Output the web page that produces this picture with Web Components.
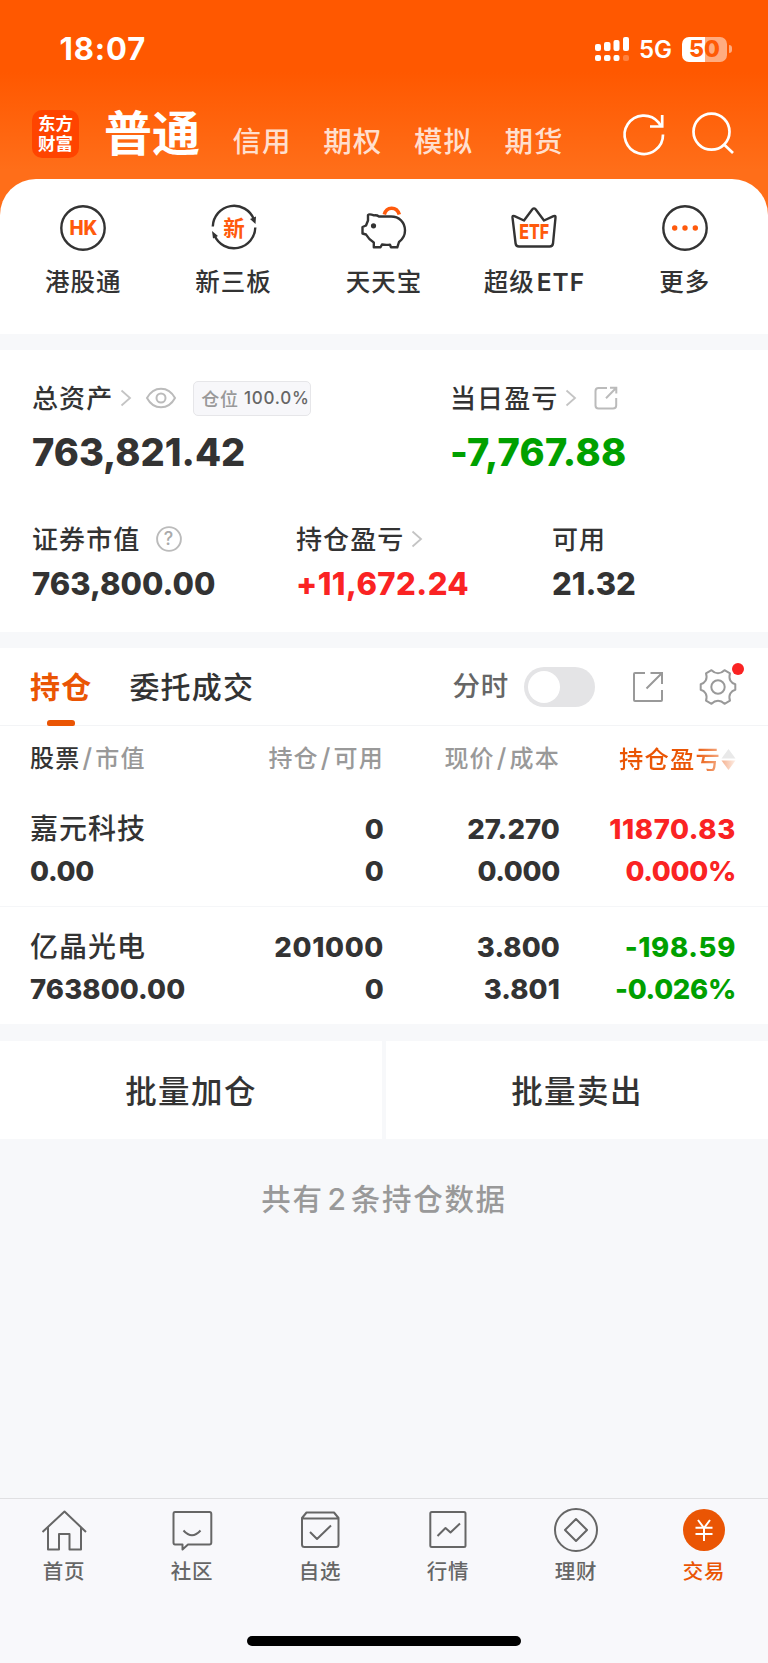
<!DOCTYPE html>
<html lang="zh-CN">
<head>
<meta charset="utf-8">
<meta name="viewport" content="width=device-width, initial-scale=1">
<title>交易</title>
<style>
  body {
    margin: 0;
    background: #f7f8fa;
    color: #333;
    font-family: Inter, "Noto Sans CJK SC", sans-serif;
    font-weight: 500;
  }
</style>
</head>
<body>
<trade-page></trade-page>

<script>
const ICONS = {
  signal: `<svg width="35" height="26" viewBox="0 0 35 26" fill="#fff">
    <rect x="0" y="8" width="6" height="7" rx="2"/><rect x="9" y="6" width="6.500" height="9" rx="2"/>
    <rect x="18.500" y="4" width="6" height="11" rx="2"/><rect x="28" y="1" width="6" height="14" rx="2"/>
    <rect x="0" y="19" width="6" height="6" rx="2"/><rect x="9" y="19" width="6.500" height="6" rx="2"/>
    <rect x="18.500" y="19" width="6" height="6" rx="2"/><rect x="28" y="19" width="6" height="6" rx="2" opacity=".25"/></svg>`,
  refresh: `<svg width="44" height="44" viewBox="0 0 44 44" fill="none" stroke="#fff" stroke-width="2.700">
    <path d="M41 22.500A19.200 19.200 0 1 1 36.500 10.400L39 14"/><path d="M40.200 3V14.500H28"/></svg>`,
  search: `<svg width="44" height="44" viewBox="0 0 44 44" fill="none" stroke="#fff" stroke-width="2.700">
    <circle cx="20.500" cy="20.700" r="18"/><path d="M32.500 33L42 42"/></svg>`,
  hk: `<svg width="46" height="46" viewBox="0 0 46 46" fill="none">
    <circle cx="23" cy="23" r="21.700" stroke="#333" stroke-width="2.400"/>
    <text x="23.500" y="30.300" font-size="20" font-weight="800" text-anchor="middle" fill="#ff5a0c" textLength="28" lengthAdjust="spacingAndGlyphs">HK</text></svg>`,
  neeq: `<svg width="46" height="46" viewBox="0 0 46 46" fill="none">
    <path d="M1.800 21.500A21.300 21.300 0 0 1 43 14.500M44.300 22.500A21.300 21.300 0 0 1 3.500 30.500" stroke="#333" stroke-width="2.400"/>
    <path d="M39 14L45 11.500 44.500 19ZM1 26L2 33.500 7 31Z" fill="#333"/>
    <text x="23" y="30.600" font-size="21.500" font-weight="700" text-anchor="middle" fill="#ff5a0c">新</text></svg>`,
  piggy: `<svg width="46" height="46" viewBox="0 0 46 46" fill="none" stroke="#333" stroke-width="2.400" stroke-linejoin="round">
    <path d="M23.300 9.500C25.500 1.500 35.500 1 38.300 9.500" stroke="#ff5a0c" stroke-width="3.600"/>
    <path d="M13 10.400C10.500 9.500 8 9 7 10V15.500L5 20.500 1.500 22V28.500L5 29.500C7 33 9.500 35.500 12.800 37.500V42.300H19.500L21 39.500C23.500 40 26.500 40 29 39.700L30 42.300H36.300L38 37C42 34 44 30 44 25.500 44 17 38 11.500 30 11.500H18C16 10 14.500 10.200 13 10.400Z"/>
    <circle cx="12.500" cy="20.800" r="2.600" fill="#333" stroke="none"/></svg>`,
  etf: `<svg width="46" height="46" viewBox="0 0 46 46" fill="none">
    <path d="M1.500 12.700Q1.300 10.200 3.500 11.200L13 15.500 21.400 4.200Q23 2.500 24.600 4.200L33 15.500 42.500 11.200Q44.800 10.200 44.500 12.700L42 38.500Q41.600 41.500 38.600 41.500H8Q5 41.500 4.600 38.500Z" stroke="#333" stroke-width="2.400" stroke-linejoin="round"/>
    <text x="23.200" y="34.300" font-size="20.500" font-weight="800" text-anchor="middle" fill="#ff5a0c" textLength="30" lengthAdjust="spacingAndGlyphs">ETF</text></svg>`,
  more: `<svg width="46" height="46" viewBox="0 0 46 46">
    <circle cx="23" cy="23" r="21.700" fill="none" stroke="#333" stroke-width="2.400"/>
    <g fill="#ff5a0c"><circle cx="12.700" cy="23" r="2.700"/><circle cx="23" cy="23" r="2.700"/><circle cx="33.300" cy="23" r="2.700"/></g></svg>`,
  chevron: `<svg width="12" height="18" viewBox="0 0 12 18" fill="none" stroke="#c4c4c4" stroke-width="1.800"><path d="M1.500 1.500L10 9 1.500 16.500"/></svg>`,
  eye: `<svg width="30" height="22" viewBox="0 0 30 22" fill="none" stroke="#bbb" stroke-width="2">
    <path d="M1 11C4.500 4.500 9.500 1.700 15 1.700S25.500 4.500 29 11C25.500 17.500 20.500 20.300 15 20.300S4.500 17.500 1 11Z"/><circle cx="15" cy="11" r="4.500"/></svg>`,
  share: `<svg width="24" height="24" viewBox="0 0 24 24" fill="none" stroke="#bbb" stroke-width="2">
    <path d="M13 2H4.500Q1.500 2 1.500 5V19.500Q1.500 22.500 4.500 22.500H19Q22.200 22.500 22.200 19.500V12M16 1.800H22.300V7.500M22.300 1.800L12 12.200"/></svg>`,
  help: `<svg width="26" height="26" viewBox="0 0 26 26" fill="none">
    <circle cx="13" cy="13" r="11.900" stroke="#bbb" stroke-width="1.900"/>
    <text x="13" y="19.300" font-size="18" font-weight="500" text-anchor="middle" fill="#aaa">?</text></svg>`,
  open: `<svg width="32" height="32" viewBox="0 0 32 32" fill="none" stroke="#999" stroke-width="2">
    <path d="M13 2H3Q2 2 2 3V29Q2 30 3 30H29Q30 30 30 29V19M18.500 2H30V13M30 2L14.500 17.500"/></svg>`,
  gear: `<svg width="38" height="38" viewBox="0 0 38 38" fill="none" stroke="#999" stroke-width="2" stroke-linejoin="round">
    <path d="M12.500 2.200Q15.500 5.200 19 5.200T25.500 2.200L31 5.400Q29.700 9.800 31.300 12.600T36.300 16.300V21.700Q33 22.500 31.300 25.400T31 32.600L25.500 35.800Q22.500 32.800 19 32.800T12.500 35.800L7 32.600Q8.300 28.200 6.700 25.400T1.700 21.700V16.300Q5 15.500 6.700 12.600T7 5.400Z"/>
    <circle cx="19" cy="19" r="6.700"/></svg>`,
  home: `<svg width="46" height="46" viewBox="0 0 46 46" fill="none" stroke="#666" stroke-width="2" stroke-linejoin="round">
    <path d="M1.500 25L23.500 4.500 45 25M7 20.500V42.500H18V27H28.500V42.500H40V20.500"/></svg>`,
  chat: `<svg width="46" height="46" viewBox="0 0 46 46" fill="none" stroke="#666" stroke-width="2" stroke-linejoin="round">
    <path d="M6 5H40.500Q42.300 5 42.300 7V35.500Q42.300 37.500 40.500 37.500H19L13.500 42.500V37.500H6Q4.500 37.500 4.500 35.500V7Q4.500 5 6 5ZM14.500 23.500Q23 33 31.500 23.500"/></svg>`,
  pick: `<svg width="46" height="46" viewBox="0 0 46 46" fill="none" stroke="#666" stroke-width="2" stroke-linejoin="round">
    <path d="M5 11L9.500 5.500H37L41.500 11V37.500Q41.500 40 39 40H7.500Q5 40 5 37.500ZM5 11.500H41.500M13 25L20 32 34 18.500"/></svg>`,
  market: `<svg width="46" height="46" viewBox="0 0 46 46" fill="none" stroke="#666" stroke-width="2" stroke-linejoin="round">
    <rect x="5.300" y="5" width="35.200" height="35" rx="1.500"/><path d="M12.500 29L20.500 21 25.500 25.500 35 16.500"/></svg>`,
  wealth: `<svg width="46" height="46" viewBox="0 0 46 46" fill="none" stroke="#666" stroke-width="2" stroke-linejoin="round">
    <circle cx="23" cy="23" r="21"/><path d="M23 12L34 23 23 34 12 23Z"/></svg>`,
  trade: `<svg width="46" height="46" viewBox="0 0 46 46" fill="none">
    <circle cx="23" cy="23" r="21" fill="#ea5504"/><path d="M17 13L23 21 29 13M14.500 20.800H31.500M14.500 27H31.500M23 21V34" stroke="#fff" stroke-width="2"/></svg>`
};

class BaseElement extends HTMLElement {
  constructor() {
    super();
    this.attachShadow({ mode: "open" });
  }

  connectedCallback() {
    const template = document.createElement("template");
    template.innerHTML = `<style>${this.styles}</style>${this.markup}`;
    this.shadowRoot.replaceChildren(template.content.cloneNode(true));
  }
}

class AppIcon extends BaseElement {
  get styles() {
    return `:host { display: block; flex: none; } svg { display: block; overflow: visible; }`;
  }
  get markup() {
    return ICONS[this.getAttribute("name")] || "";
  }
}
customElements.define("app-icon", AppIcon);

class StatusBar extends BaseElement {
  get styles() {
    return `
      :host { display: flex; align-items: center; height: 98px; padding: 0 36px 0 59.500px; box-sizing: border-box; color: #fff; }
      .time { flex: 1; font-size: 31px; font-weight: 700; letter-spacing: .9px; line-height: 36px; }
      .net { margin: 0 10px 0 9px; font-size: 24px; font-weight: 600; line-height: 24px; padding-top: 2px; }
      .battery { width: 45px; height: 25px; border-radius: 7px; text-align: center; color: #ff5a05;
        background: linear-gradient(90deg, #fff 51%, #ffac80 51%); font-size: 23px; font-weight: 800; line-height: 25px; }
      .cap { width: 3px; height: 8px; margin-left: 2px; border-radius: 0 3px 3px 0; background: #ffac80; }
    `;
  }
  get markup() {
    return `<span class="time">18:07</span><app-icon name="signal"></app-icon>
      <span class="net">5G</span><span class="battery">50</span><span class="cap"></span>`;
  }
}
customElements.define("status-bar", StatusBar);

class AccountNav extends BaseElement {
  get styles() {
    return `
      :host { display: flex; height: 82px; padding-left: 32px; box-sizing: border-box; color: #fff; }
      .logo { width: 47px; height: 48px; margin-top: 12px; border-radius: 10px; background: #ff4400;
        font-size: 17.500px; font-weight: 700; line-height: 20px; text-align: center; box-sizing: border-box; padding-top: 4px; }
      .active { margin: 0 0 0 25px; width: 128.500px; font-size: 48px; font-weight: 700; line-height: 72px; }
      .item { width: 90.700px; font-size: 28.500px; letter-spacing: 1px; line-height: 88px; color: #ffdfce; }
      .refresh { margin: 14px 0 0 26.500px; }
      .search { margin: 13px 0 0 25px; }
    `;
  }
  get markup() {
    return `<div class="logo">东方<br>财富</div><span class="active">普通</span>
      <span class="item">信用</span><span class="item">期权</span><span class="item">模拟</span><span class="item">期货</span>
      <app-icon class="refresh" name="refresh"></app-icon><app-icon class="search" name="search"></app-icon>`;
  }
}
customElements.define("account-nav", AccountNav);

class QuickLink extends BaseElement {
  get styles() {
    return `
      :host { display: flex; flex-direction: column; align-items: center; flex: 1; }
      span { margin-top: 13px; font-size: 24.500px; line-height: 36px; letter-spacing: 1px; white-space: nowrap; }
    `;
  }
  get markup() {
    return `<app-icon name="${this.getAttribute("icon")}"></app-icon><span><slot></slot></span>`;
  }
}
customElements.define("quick-link", QuickLink);

class StatItem extends BaseElement {
  get styles() {
    return `
      :host { display: block; }
      .label { display: flex; align-items: center; height: 36px; font-size: 26px; letter-spacing: 1.100px; white-space: nowrap; }
      .text { position: relative; top: -2px; }
      .value { font-size: 31px; font-weight: 800; line-height: 41px; margin-top: 6px; letter-spacing: var(--value-spacing, 0); color: var(--value-color, #333); white-space: nowrap; }
      :host([large]) .value { font-size: 38px; line-height: 50px; margin-top: 11px; }
    `;
  }
  get markup() {
    return `<div class="label"><span class="text">${this.getAttribute("label")}</span><slot></slot></div>
      <div class="value">${this.getAttribute("value")}</div>`;
  }
}
customElements.define("stat-item", StatItem);

class AssetSummary extends BaseElement {
  get styles() {
    return `
      :host { display: block; height: 282px; margin-top: 16px; padding: 30px 0 0 32px; box-sizing: border-box; background: #fff; }
      .row { display: grid; grid-template-columns: 418px 1fr; }
      .row.three { grid-template-columns: 264px 256px 1fr; margin-top: 44px; }
      .up { --value-color: #fa2323; --value-spacing: .45px; }
      .down { --value-color: #00a000; --value-spacing: .3px; }
      .chevron { margin-left: 7px; }
      .eye { margin-left: 14px; }
      .share { margin-left: 17px; }
      .help { margin-left: 16px; }
      .badge { display: flex; align-items: center; width: 118px; height: 35px; margin-left: 17px; padding-left: 7px; box-sizing: border-box;
        border: 1.500px solid #e6e6e9; border-radius: 5px; background: #f7f7fa; color: #999; font-size: 18px; letter-spacing: .8px; }
      .badge b { margin-left: 5px; color: #666; font-size: 17px; font-weight: 500; letter-spacing: .75px; }
    `;
  }
  get markup() {
    return `
      <div class="row">
        <stat-item large label="总资产" value="763,821.42">
          <app-icon class="chevron" name="chevron"></app-icon><app-icon class="eye" name="eye"></app-icon>
          <span class="badge">仓位<b>100.0%</b></span>
        </stat-item>
        <stat-item large class="down" label="当日盈亏" value="-7,767.88">
          <app-icon class="chevron" name="chevron"></app-icon><app-icon class="share" name="share"></app-icon>
        </stat-item>
      </div>
      <div class="row three">
        <stat-item label="证券市值" value="763,800.00"><app-icon class="help" name="help"></app-icon></stat-item>
        <stat-item class="up" label="持仓盈亏" value="+11,672.24"><app-icon class="chevron" name="chevron"></app-icon></stat-item>
        <stat-item label="可用" value="21.32"></stat-item>
      </div>`;
  }
}
customElements.define("asset-summary", AssetSummary);

class HoldingTabs extends BaseElement {
  get styles() {
    return `
      :host { display: flex; align-items: center; height: 78px; padding: 0 30px; box-sizing: border-box; border-bottom: 1.500px solid #f3f4f6; }
      .tab { position: relative; font-size: 30px; letter-spacing: 1.200px; line-height: 78px; }
      .tab.on { margin-right: 37px; font-weight: 700; color: #ea5504; }
      .tab.on::after { content: ""; position: absolute; left: 17px; bottom: 0; width: 28px; height: 6px; border-radius: 3px 3px 2px 2px; background: #ea5504; }
      .label { margin-left: auto; font-size: 27.500px; line-height: 38px; padding-bottom: 1px; letter-spacing: .8px; color: #666; }
      .toggle { width: 71px; height: 40px; margin-left: 15px; padding: 4px; box-sizing: border-box; border-radius: 20px; background: #e4e4e6; }
      .toggle i { display: block; width: 32px; height: 32px; border-radius: 50%; background: #fff; }
      .open { margin-left: 37px; }
      .gear { position: relative; margin: 0 1px 0 35px; }
      .gear i { position: absolute; right: -7px; top: -5px; width: 12px; height: 12px; border-radius: 50%; background: #fa2323; }
    `;
  }
  get markup() {
    return `<span class="tab on">持仓</span><span class="tab">委托成交</span><span class="label">分时</span>
      <span class="toggle"><i></i></span><app-icon class="open" name="open"></app-icon>
      <span class="gear"><app-icon name="gear"></app-icon><i></i></span>`;
  }
}
customElements.define("holding-tabs", HoldingTabs);

class HoldingHead extends BaseElement {
  get styles() {
    return `
      :host { display: grid; grid-template-columns: 177px 177px 176px 176px; height: 66px; padding-left: 30px; line-height: 64px;
        color: #999; font-size: 24px; letter-spacing: 1.200px; white-space: nowrap; }
      span { text-align: right; }
      span:first-of-type { text-align: left; }
      b { color: #333; font-weight: 500; }
      i { font-style: normal; font-size: 26px; margin: 0 2px; }
      .sort { display: flex; align-items: center; justify-content: flex-end; height: 65px; }
      .sort em { font-style: normal; font-size: 24.300px; background: linear-gradient(90deg, #ea5504 75%, #f4b08c); -webkit-background-clip: text; color: transparent; }
      .sort svg { margin-top: 2px; }
    `;
  }
  get markup() {
    return `<span><b>股票</b><i>/</i>市值</span><span>持仓<i>/</i>可用</span><span>现价<i>/</i>成本</span>
      <span class="sort"><em>持仓盈亏</em><svg width="15" height="22" viewBox="0 0 15 22">
        <defs><linearGradient id="fade"><stop stop-color="#f5b18f"/><stop offset="1" stop-color="#fdeee6"/></linearGradient></defs>
        <path d="M7.500 0L14.500 9.500H.5Z" fill="#e9e9e9"/><path d="M.5 11.500H14.500L7.500 21Z" fill="url(#fade)"/></svg></span>`;
  }
}
customElements.define("holding-head", HoldingHead);

class HoldingRow extends BaseElement {
  get styles() {
    return `
      :host { display: grid; grid-template-columns: 160px 194px 176px 176px; grid-template-rows: 42px 42px; height: 114px; padding: 16px 0 0 30px;
        box-sizing: border-box; font-size: 27.500px; font-weight: 800; line-height: 42px; letter-spacing: .1px; text-align: right; white-space: nowrap; }
      :host(.line) { height: 118px; padding-top: 19px; }
      span:nth-of-type(4n + 1) { text-align: left; }
      .name { font-size: 28px; font-weight: 500; letter-spacing: 1px; }
      .fraction { letter-spacing: -.3px; }
      .ones { letter-spacing: .65px; }
      .gain { color: #fa2323; }
      .loss { color: #00a000; }
    `;
  }
  get markup() {
    const cells = this.getAttribute("cells").split("|");
    const tone = this.getAttribute("tone");
    return cells.map((text, i) => {
      const cls = [];
      if (i === 0) cls.push("name");
      if (i % 4 === 3) cls.push(tone);
      // narrow "1" needs looser tracking, leading "0." tighter
      if (/^-?0\./.test(text)) cls.push("fraction");
      else if (text.length > 5 && text.includes("1")) cls.push("ones");
      return `<span class="${cls.join(" ")}">${text}</span>`;
    }).join("");
  }
}
customElements.define("holding-row", HoldingRow);

class BatchActions extends BaseElement {
  get styles() {
    return `
      :host { display: flex; gap: 4px; height: 98px; margin-top: 17px; }
      span { flex: 1; background: #fff; text-align: center; font-size: 31.500px; line-height: 101px; letter-spacing: 1.400px; }
    `;
  }
  get markup() {
    return `<span>批量加仓</span><span>批量卖出</span>`;
  }
}
customElements.define("batch-actions", BatchActions);

class TabItem extends BaseElement {
  get styles() {
    return `
      :host { display: flex; flex-direction: column; align-items: center; flex: 1; color: #666; }
      :host([active]) { color: #ea5504; }
      span { margin-top: 4px; font-size: 20.500px; line-height: 30px; letter-spacing: .8px; }
    `;
  }
  get markup() {
    return `<app-icon name="${this.getAttribute("icon")}"></app-icon><span><slot></slot></span>`;
  }
}
customElements.define("tab-item", TabItem);

class TradePage extends BaseElement {
  get styles() {
    return `
      :host { display: flex; flex-direction: column; width: 768px; height: 1663px; overflow: hidden; }
      header { height: 230px; background: linear-gradient(180deg, #ff5800 72px, #ff6e19 170px); }
      .quick { display: flex; height: 155px; margin-top: -51px; padding: 26px 8px 0; box-sizing: border-box; border-radius: 36px 36px 0 0; background: #fff; }
      .quick i { font-style: normal; font-weight: 600; margin-left: 2px; }
      .holdings { margin-top: 16px; background: #fff; }
      .line { border-top: 1.500px solid #f5f6f8; }
      .count { margin-top: 38px; text-align: center; color: #999; font-size: 29.500px; line-height: 44px; letter-spacing: 1.700px; }
      .count i { font-style: normal; font-size: 30px; margin: 0 3px 0 4px; }
      footer { margin-top: auto; height: 165px; border-top: 1.500px solid #e0e0e2; box-sizing: border-box; background: #f8f8fb; }
      nav { display: flex; padding-top: 8px; }
      .bar { width: 274px; height: 10px; margin: 49px auto 0; border-radius: 5px; background: #000; }
    `;
  }
  get markup() {
    return `
      <header><status-bar></status-bar><account-nav></account-nav></header>
      <section class="quick">
        <quick-link icon="hk">港股通</quick-link>
        <quick-link icon="neeq">新三板</quick-link>
        <quick-link icon="piggy">天天宝</quick-link>
        <quick-link icon="etf">超级<i>ETF</i></quick-link>
        <quick-link icon="more">更多</quick-link>
      </section>
      <asset-summary></asset-summary>
      <section class="holdings">
        <holding-tabs></holding-tabs>
        <holding-head></holding-head>
        <holding-row tone="gain" cells="嘉元科技|0|27.270|11870.83|0.00|0|0.000|0.000%"></holding-row>
        <holding-row class="line" tone="loss" cells="亿晶光电|201000|3.800|-198.59|763800.00|0|3.801|-0.026%"></holding-row>
      </section>
      <batch-actions></batch-actions>
      <div class="count">共有<i>2</i>条持仓数据</div>
      <footer>
        <nav>
          <tab-item icon="home">首页</tab-item>
          <tab-item icon="chat">社区</tab-item>
          <tab-item icon="pick">自选</tab-item>
          <tab-item icon="market">行情</tab-item>
          <tab-item icon="wealth">理财</tab-item>
          <tab-item icon="trade" active>交易</tab-item>
        </nav>
        <div class="bar"></div>
      </footer>`;
  }
}
customElements.define("trade-page", TradePage);
</script>
</body>
</html>
